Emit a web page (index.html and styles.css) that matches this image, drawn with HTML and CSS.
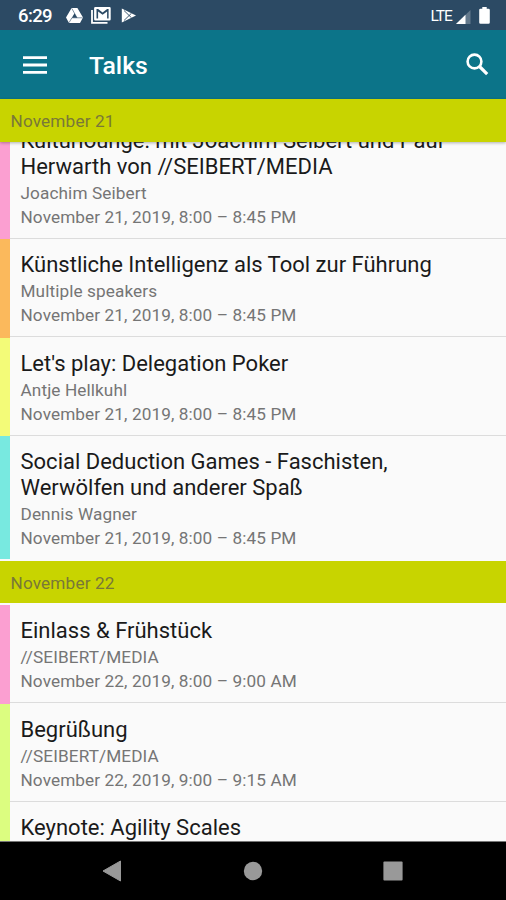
FILE: index.html
```html
<!DOCTYPE html>
<html lang="de">
<head>
<meta charset="utf-8">
<title>Talks</title>
<link rel="stylesheet" href="styles.css">
</head>
<body>
<div class="screen">
  <div class="status">
    <span class="clock">6:29</span>
    <svg class="drive" width="17" height="15" viewBox="0 0 17 15"><path fill="#fff" fill-rule="evenodd" d="M5.6 0h5.8L17 9.6 14 15H3L0 9.6zM8.5 5.2 5.9 9.8h5.2z"/><path d="M5.8.4 11 9.8M3 14.7l2.9-4.9h10.7" fill="none" stroke="#2c4a64" stroke-width=".6"/></svg>
    <svg class="mail" width="20" height="17" viewBox="0 0 20 17"><path d="M1 3v12.8h15.5" fill="none" stroke="#fff" stroke-width="1.8"/><path fill="#fff" fill-rule="evenodd" d="M4.3 0h14.2q1.2 0 1.2 1.2v11q0 1.2-1.2 1.2H4.3q-1.2 0-1.2-1.2v-11Q3.1 0 4.3 0zM5.5 2v9.500h1.600V4.500l4.500 3.300 4.500-3.300v7h1.500V2h-1.500l-4.500 3.500L7.100 2z"/></svg>
    <svg class="play" width="16" height="15" viewBox="0 0 16 15"><path d="M.8.5v14L15 7.500z" fill="#fff"/><path d="M3 2.500l7.500 7.300M3 12.500l7.500-7.300" stroke="#2c4a64" stroke-width=".9" fill="none"/></svg>
    <span class="lte">LTE</span>
    <svg class="signal" width="15" height="14" viewBox="0 0 15 14"><path d="M14.500 0v14H0z" fill="#63798c"/><path d="M9.500 4.800V14H0z" fill="#fff"/></svg>
    <svg class="battery" width="11" height="17" viewBox="0 0 11 17"><path d="M3.300 0h4.400v1.700h1.800q1.300 0 1.300 1.300v12.500q0 1.300-1.300 1.300h-8Q.2 16.800.2 15.500V3q0-1.300 1.300-1.300h1.800z" fill="#fff"/></svg>
  </div>
  <header class="appbar">
    <svg width="24" height="18" viewBox="0 0 24 18"><path d="M0 1.700h24M0 9h24M0 16.300h24" stroke="#fff" stroke-width="2.800"/></svg>
    <h1>Talks</h1>
    <svg class="search" width="23" height="23" viewBox="0 0 23 23" fill="none" stroke="#fff"><circle cx="8.500" cy="8.500" r="6.900" stroke-width="2.600"/><path d="m13.500 13.500 7.700 7.700" stroke-width="3.200"/></svg>
  </header>
  <div class="day pinned">November 21</div>
  <main class="list">
    <article class="talk pink first"><h2>Kulturlounge: mit Joachim Seibert und Paul<br>Herwarth von //SEIBERT/MEDIA</h2><p>Joachim Seibert</p><p class="time">November 21, 2019, 8:00 – 8:45 PM</p></article>
    <article class="talk orange"><h2>Künstliche Intelligenz als Tool zur Führung</h2><p>Multiple speakers</p><p class="time">November 21, 2019, 8:00 – 8:45 PM</p></article>
    <article class="talk yellow"><h2>Let's play: Delegation Poker</h2><p>Antje Hellkuhl</p><p class="time">November 21, 2019, 8:00 – 8:45 PM</p></article>
    <article class="talk cyan last"><h2>Social Deduction Games - Faschisten,<br>Werwölfen und anderer Spaß</h2><p>Dennis Wagner</p><p class="time">November 21, 2019, 8:00 – 8:45 PM</p></article>
    <div class="day inline">November 22</div>
    <article class="talk pink"><h2>Einlass &amp; Frühstück</h2><p>//SEIBERT/MEDIA</p><p class="time">November 22, 2019, 8:00 – 9:00 AM</p></article>
    <article class="talk lime"><h2>Begrüßung</h2><p>//SEIBERT/MEDIA</p><p class="time">November 22, 2019, 9:00 – 9:15 AM</p></article>
    <article class="talk lime"><h2>Keynote: Agility Scales</h2></article>
  </main>
  <nav class="nav">
    <svg width="20" height="22" viewBox="0 0 20 22"><path d="M18.500 1v20L1 11z" fill="#999" stroke="#999" stroke-linejoin="round"/></svg>
    <svg width="20" height="20" viewBox="0 0 20 20"><circle cx="10" cy="10" r="9.200" fill="#999"/></svg>
    <svg width="20" height="20" viewBox="0 0 20 20"><rect x=".4" y=".4" width="19.200" height="19.200" rx="1" fill="#999"/></svg>
  </nav>
</div>
</body>
</html>
```
FILE: styles.css
```css
* { box-sizing: border-box; }
body, h1, h2, p { margin: 0; }
body { font-family: Roboto, sans-serif; background: #000; }
.screen { width: 506px; height: 900px; display: flex; flex-direction: column; overflow: hidden; }
.status { flex: none; height: 30px; background: #2c4a64; color: #fff; display: flex; align-items: center; padding: 1px 16px 0 18px; }
.clock { font-size: 18.5px; font-weight: 500; letter-spacing: -0.6px; width: 48px; }
.mail { margin-left: 8px; }
.play { margin-left: 10px; }
.lte { margin-left: auto; font-size: 15.5px; letter-spacing: -0.9px; }
.signal { margin: 2px 8px 0 4px; }
.appbar { flex: none; height: 69px; background: #0c7489; color: #fff; display: flex; align-items: center; padding: 0 17px 0 23px; }
.appbar h1 { margin: 1px 0 0 42px; font-size: 24.8px; font-weight: 500; }
.search { margin: -1px 0 0 auto; }
.day { flex: none; height: 43px; padding: 2px 10.5px 0; background: #c8d400; color: #797838; font-size: 17.2px; letter-spacing: 0.15px; line-height: 41px; }
.pinned { position: relative; box-shadow: 0 1px 3px rgba(0, 0, 0, 0.3); }
.inline { height: 42px; margin: 2px 0; }
.list { height: 700px; flex: none; overflow: hidden; background: #fafafa; border-bottom: 1px solid #777; }
.talk { min-height: 98.4px; padding: 13px 10px 0 10.500px; border-left: 10px solid; background: linear-gradient(#dcdcdc, #dcdcdc) bottom / 100% 1.4px no-repeat; }
.first { margin-top: -27.2px; height: 124.4px; }
.last { height: 123.2px; background: none; }
.talk h2 { font-size: 22px; line-height: 26px; font-weight: 400; color: #1a1a1a; white-space: nowrap; }
.talk p { font-size: 17.2px; line-height: 24px; margin-top: 1px; color: #757575; letter-spacing: 0.1px; white-space: nowrap; }
.talk .time { margin-top: 0; }
.pink { border-left-color: #fb9fd1; }
.orange { border-left-color: #fbb95c; }
.yellow { border-left-color: #f3fb78; }
.cyan { border-left-color: #78e9e0; }
.lime { border-left-color: #dcfd80; }
.nav { height: 58px; flex: none; background: #000; display: flex; justify-content: space-between; align-items: center; padding: 0 103px 0 102px; }
```
